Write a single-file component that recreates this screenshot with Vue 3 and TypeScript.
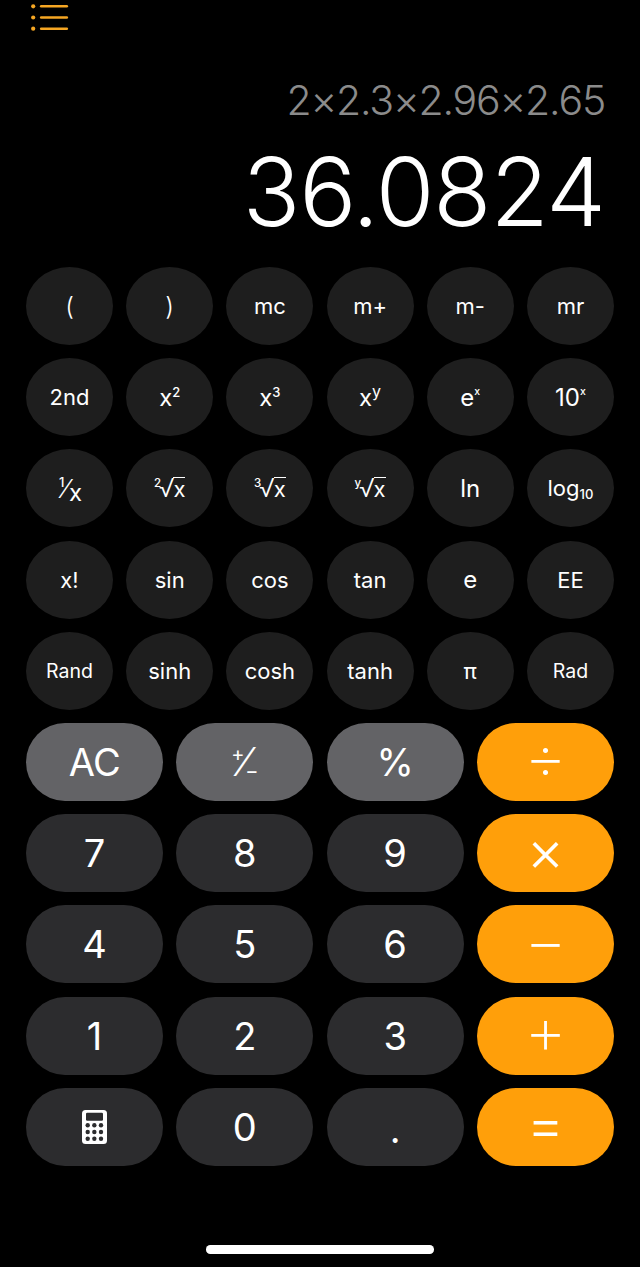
<script setup lang="ts">
interface SciKey {
  label: string
  sup?: string
  sub?: string
  pre?: string
  root?: boolean
  cls?: string
}

interface MainKey {
  label?: string
  tone: 'gray' | 'dark' | 'orange'
  cls?: string
  icon?: boolean
  plusMinus?: boolean
}

const sciKeys: SciKey[] = [
  { label: '(', cls: 'paren' },
  { label: ')', cls: 'paren' },
  { label: 'mc' },
  { label: 'm+' },
  { label: 'm-' },
  { label: 'mr' },
  { label: '2nd' },
  { label: 'x', sup: '2', cls: 'big' },
  { label: 'x', sup: '3', cls: 'big' },
  { label: 'x', sup: 'y', cls: 'big y-sup' },
  { label: 'e', sup: 'x', cls: 'big tiny-sup' },
  { label: '10', sup: 'x', cls: 'big tiny-sup' },
  { label: 'x', pre: '1' },
  { label: 'x', pre: '2', root: true },
  { label: 'x', pre: '3', root: true },
  { label: 'x', pre: 'y', root: true },
  { label: 'ln', cls: 'big' },
  { label: 'log', sub: '10' },
  { label: 'x!' },
  { label: 'sin' },
  { label: 'cos' },
  { label: 'tan' },
  { label: 'e', cls: 'big' },
  { label: 'EE' },
  { label: 'Rand', cls: 'small' },
  { label: 'sinh' },
  { label: 'cosh' },
  { label: 'tanh' },
  { label: 'π' },
  { label: 'Rad', cls: 'small' }
]

const mainKeys: MainKey[] = [
  { label: 'AC', tone: 'gray', cls: 'ac' },
  { tone: 'gray', plusMinus: true },
  { label: '%', tone: 'gray' },
  { label: '÷', tone: 'orange', cls: 'wide-op low-op' },
  { label: '7', tone: 'dark' },
  { label: '8', tone: 'dark' },
  { label: '9', tone: 'dark' },
  { label: '×', tone: 'orange', cls: 'narrow-op' },
  { label: '4', tone: 'dark' },
  { label: '5', tone: 'dark' },
  { label: '6', tone: 'dark' },
  { label: '−', tone: 'orange', cls: 'wide-op' },
  { label: '1', tone: 'dark' },
  { label: '2', tone: 'dark' },
  { label: '3', tone: 'dark' },
  { label: '+', tone: 'orange', cls: 'wide-op low-op' },
  { tone: 'dark', icon: true },
  { label: '0', tone: 'dark' },
  { label: '.', tone: 'dark', cls: 'dot' },
  { label: '=', tone: 'orange', cls: 'narrow-op' }
]

const calcDots = [0, 1, 2].flatMap((r) => [0, 1, 2].map((c) => ({ x: 5.7 + c * 6.65, y: 15.3 + r * 6.7 })))
</script>

<template>
  <div class="calc">
    <svg class="menu" width="40" height="32" viewBox="0 0 40 32">
      <g fill="#f5a623">
        <circle cx="3.2" cy="6.3" r="2.1" />
        <circle cx="3.2" cy="17.5" r="2.1" />
        <circle cx="3.2" cy="28.7" r="2.1" />
      </g>
      <g stroke="#f5a623" stroke-width="2.6" stroke-linecap="round">
        <path d="M11.2 6.3H36.8" />
        <path d="M11.2 17.5H36.8" />
        <path d="M11.2 28.7H36.8" />
      </g>
    </svg>

    <div class="display">
      <div class="expr">2×2.3×2.96×2.65</div>
      <div class="result">36.0824</div>
    </div>

    <div class="keys">
      <div class="sci-grid">
        <button v-for="(k, i) in sciKeys" :key="i" class="key sci" :class="k.cls">
          <span v-if="k.root" class="rootwrap">
            <span class="index">{{ k.pre }}</span><span class="radical">√</span><span class="radicand">{{ k.label }}</span>
          </span>
          <span v-else-if="k.pre" class="fracwrap">
            <span class="num">{{ k.pre }}</span><span class="slash">⁄</span><span class="den">{{ k.label }}</span>
          </span>
          <span v-else class="lbl">{{ k.label }}<sup v-if="k.sup">{{ k.sup }}</sup><sub v-if="k.sub">{{ k.sub }}</sub></span>
        </button>
      </div>

      <div class="main-grid">
        <button v-for="(k, i) in mainKeys" :key="i" class="key main" :class="[k.tone, k.cls]">
          <svg v-if="k.icon" width="25" height="34" viewBox="0 0 25 34">
            <rect x="0" y="0" width="25" height="34" rx="3.5" fill="#fff" />
            <rect x="4" y="2.8" width="17" height="8" rx="1.2" fill="#2c2c2e" />
            <circle v-for="(d, j) in calcDots" :key="j" :cx="d.x" :cy="d.y" r="2.2" fill="#2c2c2e" />
          </svg>
          <span v-else-if="k.plusMinus" class="pm">
            <span class="pm-plus">+</span><span class="pm-slash">⁄</span><span class="pm-minus">−</span>
          </span>
          <template v-else>{{ k.label }}</template>
        </button>
      </div>
    </div>

    <div class="home-bar"></div>
  </div>
</template>

<style>
html,
body {
  margin: 0;
  background: #000;
}
</style>

<style scoped>
.calc {
  width: 640px;
  height: 1267px;
  box-sizing: border-box;
  background: #000;
  padding: 0 26px;
  display: flex;
  flex-direction: column;
  font-family: Inter, 'Liberation Sans', sans-serif;
  color: #fff;
  overflow: hidden;
}

.menu {
  display: block;
  margin-left: 4px;
  flex: none;
}

.display {
  height: 235px;
  text-align: right;
  flex: none;
  padding-right: 9px;
  padding-left: 200px;
  box-sizing: border-box;
}

.expr {
  margin-top: 44px;
  font-size: 41px;
  line-height: 48px;
  font-weight: 300;
  letter-spacing: -1.2px;
  color: #8b8b8b;
  white-space: nowrap;
}

.result {
  margin-top: 11.5px;
  font-size: 95px;
  line-height: 112px;
  font-weight: 330;
  letter-spacing: -1px;
  white-space: nowrap;
}

.keys {
  display: flex;
  flex-direction: column;
  gap: 13.2px;
}

.sci-grid {
  display: grid;
  grid-template-columns: repeat(6, 87px);
  justify-content: space-between;
  row-gap: 13.2px;
}

.main-grid {
  display: grid;
  grid-template-columns: repeat(4, 137px);
  justify-content: space-between;
  row-gap: 13.2px;
}

.key {
  height: 78px;
  border: 0;
  padding: 0;
  margin: 0;
  color: #fff;
  font-family: inherit;
  display: flex;
  align-items: center;
  justify-content: center;
  border-radius: 39px;
}

.sci {
  background: #1e1e1e;
  font-size: 22px;
  font-weight: 370;
  border-radius: 43.5px / 39px;
}

.sci.big {
  font-size: 24px;
}

.sci.small {
  font-size: 19.5px;
}

.sci.paren {
  font-size: 25px;
  font-weight: 300;
}

.lbl {
  display: inline-block;
}

.sci sup {
  font-size: 13px;
  font-weight: 500;
  line-height: 0;
  vertical-align: 9px;
}

.sci.y-sup sup {
  font-size: 16px;
  font-weight: 400;
  vertical-align: 9px;
}

.sci.tiny-sup sup {
  font-size: 10.5px;
  vertical-align: 11px;
}

.sci sub {
  font-size: 13px;
  font-weight: 500;
  line-height: 0;
  vertical-align: -3px;
}

.rootwrap {
  display: inline-flex;
  align-items: flex-start;
  font-size: 22px;
  line-height: 26px;
}

.index {
  font-size: 11.5px;
  font-weight: 500;
  line-height: 12px;
  margin-top: 1px;
  margin-right: -2px;
}

.radical {
  font-weight: 300;
  font-size: 25px;
  margin-top: -1px;
  margin-right: -1px;
}

.radicand {
  border-top: 1.5px solid #fff;
  line-height: 22px;
  margin-top: 1px;
}

.fracwrap {
  display: inline-flex;
  align-items: center;
}

.num {
  font-size: 13px;
  font-weight: 500;
  transform: translate(1px, -6px);
}

.slash {
  font-size: 26px;
  font-weight: 300;
}

.den {
  font-size: 24px;
  transform: translate(1px, 4px);
}

.main {
  font-size: 38px;
  font-weight: 370;
}

.ac {
  letter-spacing: -0.5px;
}

.gray {
  background: #636366;
}

.dark {
  background: #2c2c2e;
}

.orange {
  background: #ff9f0a;
  padding-bottom: 6px;
  box-sizing: border-box;
}

.wide-op {
  font-size: 66px;
  font-weight: 250;
  padding-bottom: 8px;
}

.low-op {
  padding-bottom: 12px;
}

.narrow-op {
  font-size: 58px;
  font-weight: 300;
}

.dot {
  align-items: flex-end;
  padding-bottom: 15px;
  box-sizing: border-box;
  font-size: 34px;
  font-weight: 500;
}

.pm {
  display: inline-flex;
  align-items: center;
}

.pm-plus {
  font-size: 20px;
  transform: translate(3px, -8px);
}

.pm-slash {
  font-size: 40px;
  font-weight: 300;
}

.pm-minus {
  font-size: 20px;
  transform: translate(-3px, 9px);
}

.home-bar {
  width: 228px;
  height: 8.5px;
  border-radius: 4.25px;
  background: #fff;
  margin: 79.5px auto 0 auto;
  flex: none;
}
</style>
